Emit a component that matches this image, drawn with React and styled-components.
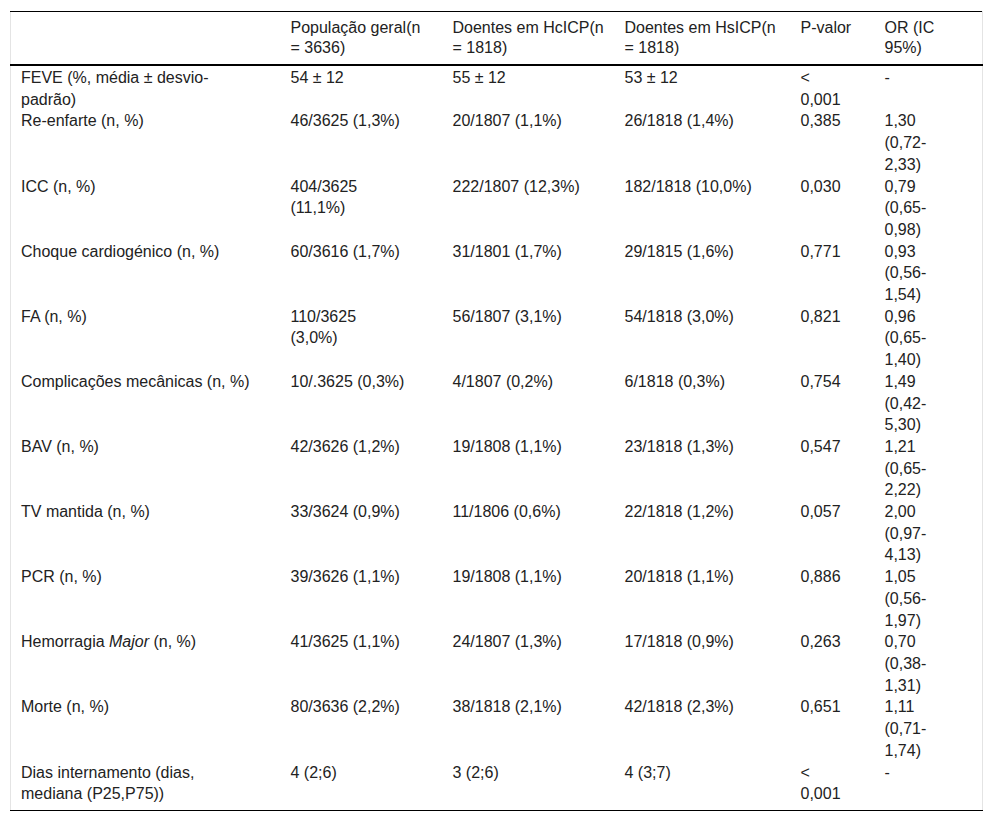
import React from "react";
import styled, { createGlobalStyle } from "styled-components";

const GlobalStyle = createGlobalStyle`
  body {
    margin: 0;
    background: #fff;
    font-family: "Liberation Sans", Arial, sans-serif;
    color: #222;
  }
`;

const Wrapper = styled.div`
  padding: 11px 10px 0 10px;
`;

const Table = styled.table`
  width: 972px;
  border-collapse: collapse;
  table-layout: fixed;
  font-size: 16px;
  border-left: 1px solid #e4e4e4;
  border-right: 1px solid #e4e4e4;
  border-top: 1px solid #000;
  border-bottom: 1px solid #000;
`;

const HeadCell = styled.th`
  font-weight: normal;
  text-align: left;
  vertical-align: top;
  padding: 6px 10px 6px;
  line-height: 20px;
  white-space: nowrap;
  border-bottom: 2px solid #000;
`;

const Row = styled.tr`
  &:first-child td {
    padding-top: 1px;
  }
  &:last-child td {
    padding-bottom: 5px;
  }
`;

const Cell = styled.td`
  vertical-align: top;
  text-align: left;
  padding: 0 10px;
  line-height: 21.7px;
  white-space: nowrap;
`;

const Line = styled.span`
  display: block;
`;

const widths = [270, 162, 172, 176, 84, 108];

const header = [
  [],
  ["População geral(n", "= 3636)"],
  ["Doentes em HcICP(n", "= 1818)"],
  ["Doentes em HsICP(n", "= 1818)"],
  ["P-valor"],
  ["OR (IC", "95%)"],
];

const rows = [
  [["FEVE (%, média ± desvio-", "padrão)"], ["54 ± 12"], ["55 ± 12"], ["53 ± 12"], ["<", "0,001"], ["-"]],
  [["Re-enfarte (n, %)"], ["46/3625 (1,3%)"], ["20/1807 (1,1%)"], ["26/1818 (1,4%)"], ["0,385"], ["1,30", "(0,72-", "2,33)"]],
  [["ICC (n, %)"], ["404/3625", "(11,1%)"], ["222/1807 (12,3%)"], ["182/1818 (10,0%)"], ["0,030"], ["0,79", "(0,65-", "0,98)"]],
  [["Choque cardiogénico (n, %)"], ["60/3616 (1,7%)"], ["31/1801 (1,7%)"], ["29/1815 (1,6%)"], ["0,771"], ["0,93", "(0,56-", "1,54)"]],
  [["FA (n, %)"], ["110/3625", "(3,0%)"], ["56/1807 (3,1%)"], ["54/1818 (3,0%)"], ["0,821"], ["0,96", "(0,65-", "1,40)"]],
  [["Complicações mecânicas (n, %)"], ["10/.3625 (0,3%)"], ["4/1807 (0,2%)"], ["6/1818 (0,3%)"], ["0,754"], ["1,49", "(0,42-", "5,30)"]],
  [["BAV (n, %)"], ["42/3626 (1,2%)"], ["19/1808 (1,1%)"], ["23/1818 (1,3%)"], ["0,547"], ["1,21", "(0,65-", "2,22)"]],
  [["TV mantida (n, %)"], ["33/3624 (0,9%)"], ["11/1806 (0,6%)"], ["22/1818 (1,2%)"], ["0,057"], ["2,00", "(0,97-", "4,13)"]],
  [["PCR (n, %)"], ["39/3626 (1,1%)"], ["19/1808 (1,1%)"], ["20/1818 (1,1%)"], ["0,886"], ["1,05", "(0,56-", "1,97)"]],
  [
    [<>Hemorragia <i>Major</i> (n, %)</>],
    ["41/3625 (1,1%)"], ["24/1807 (1,3%)"], ["17/1818 (0,9%)"], ["0,263"], ["0,70", "(0,38-", "1,31)"],
  ],
  [["Morte (n, %)"], ["80/3636 (2,2%)"], ["38/1818 (2,1%)"], ["42/1818 (2,3%)"], ["0,651"], ["1,11", "(0,71-", "1,74)"]],
  [["Dias internamento (dias,", "mediana (P25,P75))"], ["4 (2;6)"], ["3 (2;6)"], ["4 (3;7)"], ["<", "0,001"], ["-"]],
];

const Lines = ({ lines }) =>
  lines.map((text, i) => <Line key={i}>{text}</Line>);

const App = () => (
  <Wrapper>
    <GlobalStyle />
    <Table>
      <colgroup>
        {widths.map((w, i) => (
          <col key={i} style={{ width: w }} />
        ))}
      </colgroup>
      <thead>
        <tr>
          {header.map((lines, i) => (
            <HeadCell key={i}>
              <Lines lines={lines} />
            </HeadCell>
          ))}
        </tr>
      </thead>
      <tbody>
        {rows.map((row, r) => (
          <Row key={r}>
            {row.map((lines, c) => (
              <Cell key={c}>
                <Lines lines={lines} />
              </Cell>
            ))}
          </Row>
        ))}
      </tbody>
    </Table>
  </Wrapper>
);

export default App;
